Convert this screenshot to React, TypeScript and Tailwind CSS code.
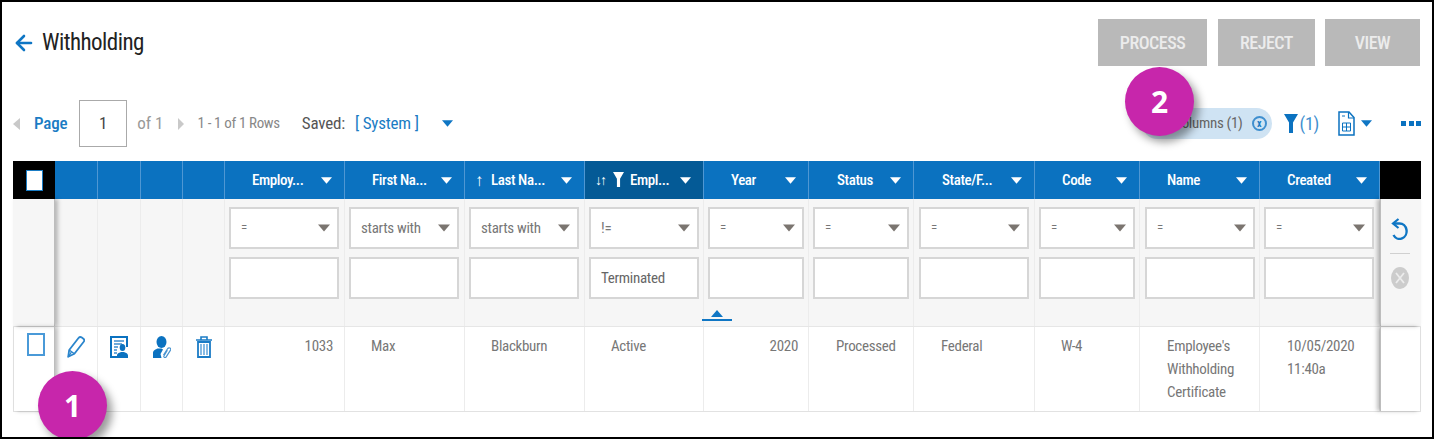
import { ArrowLeft } from "lucide-react";

const FONT = "font-['Roboto',sans-serif] font-stretch-[75%]";

type Column = {
  label: string;
  width: string;
  labelClass: string;
  filterClass: string;
  op: string;
  value?: string;
  cellClass: string;
  sort?: "up" | "both";
  active?: boolean;
  lines: string[];
};

const columns: Column[] = [
  { label: "Employ...", width: "w-[120px]", labelClass: "ml-[27px]", filterClass: "pl-[4px] pr-[5px]", op: "=", cellClass: "text-right pr-[11px]", lines: ["1033"] },
  { label: "First Na...", width: "w-[120px]", labelClass: "ml-[27px]", filterClass: "pl-[4px] pr-[5px]", op: "starts with", cellClass: "pl-[26px]", lines: ["Max"] },
  { label: "Last Na...", width: "w-[120px]", labelClass: "ml-[26px]", filterClass: "pl-[4px] pr-[5px]", op: "starts with", cellClass: "pl-[26px]", sort: "up", lines: ["Blackburn"] },
  { label: "Empl...", width: "w-[119px]", labelClass: "ml-[45px]", filterClass: "px-[4px]", op: "!=", value: "Terminated", cellClass: "pl-[26px]", sort: "both", active: true, lines: ["Active"] },
  { label: "Year", width: "w-[105px]", labelClass: "ml-[27px]", filterClass: "px-[4px]", op: "=", cellClass: "text-right pr-[10px]", lines: ["2020"] },
  { label: "Status", width: "w-[105px]", labelClass: "ml-[28px]", filterClass: "px-[4px]", op: "=", cellClass: "pl-[27px]", lines: ["Processed"] },
  { label: "State/F...", width: "w-[121px]", labelClass: "ml-[28px]", filterClass: "px-[5px]", op: "=", cellClass: "pl-[27px]", lines: ["Federal"] },
  { label: "Code", width: "w-[105px]", labelClass: "ml-[27px]", filterClass: "px-[4px]", op: "=", cellClass: "pl-[26px]", lines: ["W-4"] },
  { label: "Name", width: "w-[120px]", labelClass: "ml-[27px]", filterClass: "pl-[5px] pr-[4px]", op: "=", cellClass: "pl-[27px]", lines: ["Employee's", "Withholding", "Certificate"] },
  { label: "Created", width: "w-[120px]", labelClass: "ml-[27px]", filterClass: "pl-[4px] pr-[5px]", op: "=", cellClass: "pl-[27px]", lines: ["10/05/2020", "11:40a"] },
];

const iconWidths = ["w-[43px]", "w-[43px]", "w-[42px]", "w-[42px]"];

const Caret = ({ className }: { className: string }) => (
  <svg viewBox="0 0 12 7" className={className}>
    <path d="M0 0h12L6 7z" fill="currentColor" />
  </svg>
);

const FileIcon = () => (
  <svg viewBox="0 0 17 25" className="w-[17px] h-[25px] text-[#0b72c0]">
    <path d="M1 1h10l5 5.500V24H1z" fill="#fff" stroke="currentColor" strokeWidth="1.500" />
    <path d="M10.500 1v6H16" fill="none" stroke="currentColor" strokeWidth="1.200" />
    <path d="M4 5h3" stroke="currentColor" strokeWidth="1" />
    <path d="M4.500 12h8v8h-8zM4.500 16h8M8.500 12v8" fill="none" stroke="currentColor" strokeWidth="1" />
  </svg>
);

const PencilIcon = () => (
  <svg viewBox="0 0 18 22" className="w-[18px] h-[22px] text-[#2a85cc]">
    <path d="M1.200 20.800l1-6.800L11.500 2c1-1.200 2.200-1.300 3.300-.5l1.600 1.200c1 .8 1.100 2 .3 3.100L7.400 17.800z" fill="none" stroke="currentColor" strokeWidth="1.800" strokeLinejoin="round" />
    <path d="M2.200 14l5.200 3.800M1.200 20.800l3-4.500" fill="none" stroke="currentColor" strokeWidth="1.400" />
  </svg>
);

const FormPersonIcon = () => (
  <svg viewBox="0 0 18 22" className="w-[18px] h-[22px] text-[#0b72c0]">
    <path d="M17 11V1H1v20h6" fill="none" stroke="currentColor" strokeWidth="2" />
    <path d="M4 5h10M4 8h8M4 11h4M4 14h3M4 17h3" stroke="#3f8fcf" strokeWidth="1.300" />
    <ellipse cx="12.500" cy="11.500" rx="2.800" ry="3.500" fill="currentColor" />
    <path d="M7 22v-2.500c0-2.500 3-3 4-3.500h3c1 .5 4 1 4 3.500V22z" fill="currentColor" />
  </svg>
);

const PersonLinkIcon = () => (
  <svg viewBox="0 0 18 22" className="w-[18px] h-[22px] text-[#0b72c0]">
    <ellipse cx="8.500" cy="6" rx="5" ry="6" fill="currentColor" />
    <path d="M0 22v-5c0-3 3-3.500 4.500-4.500h4l1.500 1-2.500 4.500 1 4z" fill="currentColor" />
    <path d="M10.500 19l4.200-6.500c1.300-1.500 3.700-.2 2.800 1.600l-4.300 6.800c-1 1.300-2.800.5-2.300-1l3.500-5.600" fill="none" stroke="#4a94d0" strokeWidth="1.200" />
  </svg>
);

const TrashIcon = () => (
  <svg viewBox="0 0 16 22" className="w-[16px] h-[22px] text-[#1b7cc6]">
    <path d="M0 4h16M5 4V1h6v3" fill="none" stroke="currentColor" strokeWidth="1.600" />
    <path d="M2 6h12v15H2z" fill="none" stroke="currentColor" strokeWidth="1.800" />
    <path d="M5 8v11M8 8v11M11 8v11" stroke="#6aaade" strokeWidth="1.600" />
  </svg>
);

const UndoIcon = () => (
  <svg viewBox="0 0 17 22" className="w-[17px] h-[22px] text-[#0f76c4]">
    <path d="M7.500 1L2 5.500 7.500 10" fill="none" stroke="currentColor" strokeWidth="2.200" />
    <path d="M3 5.500h5.500a7 7.700 0 1 1-6 11.500" fill="none" stroke="currentColor" strokeWidth="2.400" />
  </svg>
);

const ClearIcon = () => (
  <svg viewBox="0 0 18 22" className="w-[18px] h-[22px]">
    <ellipse cx="9" cy="11" rx="9" ry="11" fill="#cccccc" />
    <path d="M5 6l8 10M13 6L5 16" stroke="#ececec" strokeWidth="1.800" />
  </svg>
);

const FilterIcon = ({ className }: { className: string }) => (
  <svg viewBox="0 0 14 19" className={className}>
    <path d="M0 0h14L9 8.500V19H5V8.500z" fill="currentColor" />
  </svg>
);

const Badge = ({ n, className }: { n: string; className: string }) => (
  <div
    className={`absolute w-[69px] h-[69px] rounded-full bg-[#c726ab] text-white flex items-center justify-center font-['Open_Sans',sans-serif] font-stretch-normal font-bold text-[30px] shadow-[5px_6px_9px_rgba(0,0,0,0.4)] ${className}`}
  >
    {n}
  </div>
);

const HeaderCell = ({ col }: { col: Column }) => (
  <div
    className={`${col.width} relative flex items-center border-r border-[#4f97d3] text-white ${col.active ? "bg-[#045a96]" : ""}`}
  >
    {col.sort === "up" && <span className="absolute left-[10px] top-[9px] text-[17px] leading-5 font-bold">↑</span>}
    {col.sort === "both" && (
      <>
        <span className="absolute left-[10px] top-[9px] text-[14px] leading-5 tracking-[-2px] font-bold">↓↑</span>
        <FilterIcon className="absolute left-[28px] top-[11px] w-[11px] h-[15px]" />
      </>
    )}
    <span className={`${col.labelClass} text-[15px] font-medium tracking-[-0.4px] whitespace-nowrap`}>{col.label}</span>
    <Caret className="absolute right-[12px] top-[16px] w-[11px] h-[7px]" />
  </div>
);

const FilterCell = ({ col }: { col: Column }) => (
  <div className={`${col.width} ${col.filterClass} flex flex-col gap-[8px] pt-[8px] border-r border-[#ececec]`}>
    <div className="h-[42px] bg-white border-2 border-[#d6d6d6] flex items-center justify-between pl-[10px] pr-[7px]">
      <span className={`text-[#777] whitespace-nowrap ${col.op === "=" ? "text-[13px]" : "text-[15px] tracking-[-0.3px]"}`}>
        {col.op}
      </span>
      <Caret className="w-[12px] h-[8px] text-[#7b7570]" />
    </div>
    <div className="h-[42px] bg-white border-2 border-[#d6d6d6] flex items-center pl-[10px]">
      <span className="text-[15px] text-[#666] tracking-[-0.3px]">{col.value}</span>
    </div>
  </div>
);

const DataCell = ({ col }: { col: Column }) => (
  <div className={`${col.width} ${col.cellClass} border-r border-[#ececec] pt-[8px] text-[15px] leading-[23px] tracking-[-0.3px] text-[#777]`}>
    {col.lines.map((line) => (
      <div key={line}>{line}</div>
    ))}
  </div>
);

const actions = [
  { label: "PROCESS", className: "w-[109px]" },
  { label: "REJECT", className: "w-[97px] ml-[11px]" },
  { label: "VIEW", className: "w-[95px] ml-[10px]" },
];

export default function App() {
  return (
    <div className={`${FONT} relative w-[1434px] h-[439px] overflow-hidden bg-white border-2 border-black pl-[11px] pr-[11px]`}>
      <div className="h-[98px] flex justify-between">
        <div className="flex items-center gap-[6px] h-[82px]">
          <ArrowLeft className="w-[24px] h-[24px] text-[#0f76c4] ml-[-1px]" strokeWidth={2.6} />
          <h1 className="text-[23px] font-normal text-[#222] tracking-[-0.55px]">Withholding</h1>
        </div>
        <div className="flex pt-[17px] pr-[1px]">
          {actions.map((action) => (
            <button
              key={action.label}
              className={`${action.className} h-[47px] bg-[#b9b9b9] text-[#ececec] text-[18px] font-medium tracking-[-0.5px]`}
            >
              {action.label}
            </button>
          ))}
        </div>
      </div>

      <div className="h-[61px] flex items-start justify-between">
        <div className="flex items-center h-[47px] text-[17px]">
          <span className="w-0 h-0 border-y-[6px] border-y-transparent border-r-[7px] border-r-[#c9c9c9]" />
          <span className="ml-[14px] text-[#1a7cc4] font-medium tracking-[-0.2px]">Page</span>
          <span className="ml-[12px] w-[48px] h-[47px] border border-[#aaa] flex items-center justify-center text-[#444]">1</span>
          <span className="ml-[10px] text-[#999]">of 1</span>
          <span className="ml-[14px] w-0 h-0 border-y-[6px] border-y-transparent border-l-[6px] border-l-[#c9c9c9]" />
          <span className="ml-[14px] text-[15px] text-[#888] tracking-[-0.35px]">1 - 1 of 1 Rows</span>
          <span className="ml-[22px] text-[#555] tracking-[-0.2px]">Saved:</span>
          <span className="ml-[10px] text-[#1a7cc4] tracking-[-0.2px]">[ System ]</span>
          <Caret className="ml-[23px] w-[11px] h-[7px] text-[#0f76c4]" />
        </div>
        <div className="flex items-center h-[47px]">
          <div className="h-[31px] w-[130px] flex items-center justify-end rounded-full bg-[#cfe3f3] pr-[5px] text-[15px] text-[#666] tracking-[-0.3px]">
            Columns (1)
            <span className="ml-[9px] w-[15px] h-[15px] rounded-full border-2 border-[#3f8fcf] text-[#1a7cc4] text-[10px] leading-[11px] font-bold flex items-center justify-center">
              x
            </span>
          </div>
          <FilterIcon className="ml-[12px] w-[14px] h-[19px] text-[#0b72c0]" />
          <span className="ml-[2px] text-[18px] text-[#3f8fcf] tracking-[-0.3px]">(1)</span>
          <span className="ml-[19px]"><FileIcon /></span>
          <Caret className="ml-[6px] w-[11px] h-[7px] text-[#0f76c4]" />
          <span className="ml-[29px] flex gap-[2.500px]">
            <span className="w-[5px] h-[5px] bg-[#0b72c0]" />
            <span className="w-[5px] h-[5px] bg-[#0b72c0]" />
            <span className="w-[5px] h-[5px] bg-[#0b72c0]" />
          </span>
        </div>
      </div>

      <div className="w-[1408px]">
        <div className="flex h-[38px] bg-[#0b72c0]">
          <div className="w-[42px] bg-black flex items-center justify-center">
            <div className="w-[17px] h-[21px] bg-white border border-[#1a7cc4]" />
          </div>
          {iconWidths.map((width, i) => (
            <div key={i} className={`${width} border-r border-[#4f97d3]`} />
          ))}
          {columns.map((col) => (
            <HeaderCell key={col.label} col={col} />
          ))}
          <div className="w-[41px] bg-black" />
        </div>

        <div className="flex h-[128px] bg-[#f6f6f6] border-b border-[#e6e6e6]">
          <div className="w-[42px] border-r border-[#bdbdbd] shadow-[3px_0_4px_rgba(0,0,0,0.25)]" />
          {iconWidths.map((width, i) => (
            <div key={i} className={`${width} border-r border-[#ececec]`} />
          ))}
          {columns.map((col) => (
            <FilterCell key={col.label} col={col} />
          ))}
          <div className="w-[41px] border-l border-[#bdbdbd] shadow-[-3px_0_4px_rgba(0,0,0,0.25)] flex flex-col items-center pt-[19px] pr-[3px]">
            <UndoIcon />
            <div className="mt-[13px] w-[20px] h-px bg-[#d0d0d0]" />
            <div className="mt-[13px]"><ClearIcon /></div>
          </div>
        </div>

        <div className="flex h-[85px] border-b border-l border-r border-[#e2e2e2]">
          <div className="w-[41px] border-r border-[#bdbdbd] shadow-[3px_0_4px_rgba(0,0,0,0.25)] flex justify-center pt-[6px]">
            <div className="w-[18px] h-[23px] border-2 border-[#4a9ad8] ml-[4px]" />
          </div>
          <div className="w-[43px] border-r border-[#ececec] flex justify-center pt-[9px]">
            <PencilIcon />
          </div>
          <div className="w-[43px] border-r border-[#ececec] flex justify-center pt-[9px]">
            <FormPersonIcon />
          </div>
          <div className="w-[42px] border-r border-[#ececec] flex justify-center pt-[9px]">
            <PersonLinkIcon />
          </div>
          <div className="w-[42px] border-r border-[#ececec] flex justify-center pt-[9px]">
            <TrashIcon />
          </div>
          {columns.map((col) => (
            <DataCell key={col.label} col={col} />
          ))}
          <div className="w-[40px] border-l border-[#bdbdbd] shadow-[-3px_0_4px_rgba(0,0,0,0.25)]" />
        </div>
      </div>

      {/* collapse handle under the filter rows */}
      <div className="absolute left-[700px] top-[308px] w-[30px] flex flex-col items-center">
        <Caret className="w-[14px] h-[7px] text-[#0f76c4] rotate-180" />
        <div className="mt-[2px] w-[30px] h-[2px] bg-[#0f76c4]" />
      </div>

      <Badge n="1" className="left-[36px] top-[369px]" />
      <Badge n="2" className="left-[1123px] top-[65px]" />
    </div>
  );
}
